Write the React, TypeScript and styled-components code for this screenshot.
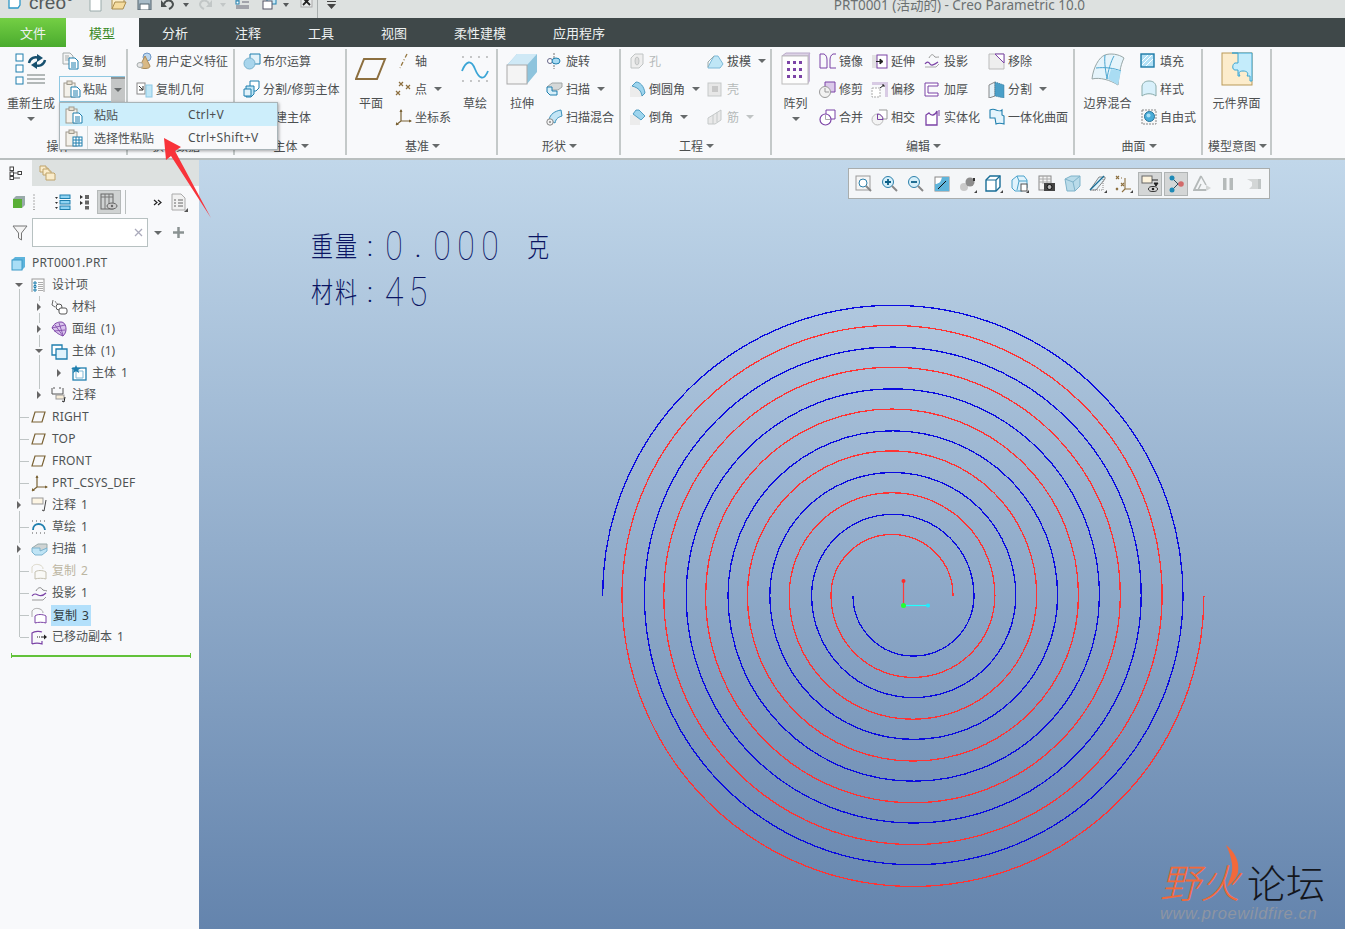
import React from "react";
import styled, { createGlobalStyle } from "styled-components";

const Global = createGlobalStyle`
  html, body { margin: 0; padding: 0; background: #f8f9fb; }
  * { box-sizing: border-box; }
`;

const FONT = `"Noto Sans", "Noto Sans CJK SC", sans-serif`;

const Page = styled.div`
  position: relative;
  width: 1345px;
  height: 929px;
  overflow: hidden;
  display: flex;
  flex-direction: column;
  font-family: ${FONT};
  font-size: 12px;
  color: #4c4f50;
  background: #f8f9fb;
`;

/* ---------- icons ---------- */
const Svg = styled.svg`
  display: block;
  flex: none;
`;
type IconProps = { w?: number; h?: number; vb?: string; children: React.ReactNode };
const Ic = ({ w = 16, h, vb, children }: IconProps) => (
  <Svg width={w} height={h ?? w} viewBox={vb ?? `0 0 ${w} ${h ?? w}`} fill="none">
    {children}
  </Svg>
);
const B = "#1f7fae";
const LB = "#bfe6f6";
const P = "#7b43a6";
const G = "#a4abab";

const icons: Record<string, React.ReactNode> = {
  regen: (
    <Ic w={32} h={34}>
      <rect x="1" y="2" width="7" height="7" fill="#fff" stroke={B} />
      <rect x="1" y="13" width="7" height="7" fill="#fff" stroke={B} />
      <rect x="1" y="25" width="7" height="7" fill="#fff" stroke={B} />
      <path d="M14 11c1-5 6-7 10-5M30 8c-1 5-6 7-10 5" stroke="#17506f" strokeWidth="2.400" />
      <path d="M22 2l6 4-6 4zM22 9l-6 4 6 4z" fill="#17506f" />
      <path d="M12 23h18M12 27h18M12 31h18" stroke="#9aa2a2" strokeWidth="1.400" />
    </Ic>
  ),
  copy: (
    <Ic w={18}>
      <path d="M1 1h7l3 3v8H1z" fill="#f5f5f5" stroke={G} />
      <path d="M3 4h4M3 6h5M3 8h5" stroke={G} />
      <path d="M7 6h6l3 3v8H7z" fill="#fff" stroke={B} />
      <path d="M9 11h5M9 13h5M9 15h5" stroke={B} />
    </Ic>
  ),
  paste: (
    <Ic w={18}>
      <rect x="1" y="3" width="11" height="14" fill="#f4f1ea" stroke="#9f9a8e" />
      <rect x="4" y="1" width="5" height="3.500" fill="#e6e0d2" stroke="#9f9a8e" />
      <path d="M8 7h6l3 3v7H8z" fill="#fff" stroke={B} />
      <path d="M10 11h5M10 13h5M10 15h5" stroke={B} />
    </Ic>
  ),
  pasteS: (
    <Ic w={18}>
      <rect x="1" y="3" width="11" height="14" fill="#f4f1ea" stroke="#9f9a8e" />
      <rect x="4" y="1" width="5" height="3.500" fill="#e6e0d2" stroke="#9f9a8e" />
      <rect x="8" y="8" width="9" height="9" fill="#fff" stroke={B} />
      <path d="M8 11h9M8 14h9M11 8v9M14 8v9" stroke={B} />
    </Ic>
  ),
  udf: (
    <Ic w={18}>
      <circle cx="11" cy="5" r="4" fill="#bcd7ef" stroke="#6f97c6" />
      <path d="M9 4 4 14a5 2.500 0 0 0 10 0z" fill="#d9b985" stroke="#a98a58" />
      <ellipse cx="4" cy="13" rx="3" ry="2.500" fill="#e7e7e7" stroke={G} />
    </Ic>
  ),
  cgeom: (
    <Ic w={18}>
      <rect x="1" y="3" width="8" height="11" fill="#fff" stroke="#888" />
      <path d="M3 6l4 4M7 6v4H3" stroke="#333" />
      <rect x="10" y="5" width="6" height="12" fill={LB} stroke="#8cc7e4" />
    </Ic>
  ),
  bool: (
    <Ic w={18}>
      <path d="M7 2h10v10H7z" fill="#e2f2fa" stroke={B} />
      <circle cx="6.500" cy="11.500" r="5.500" fill="#a8d5ec" stroke="#7ab2ce" />
    </Ic>
  ),
  split: (
    <Ic w={18}>
      <path d="M7 1h9v7l-3 3H7z" fill="#fff" stroke={B} />
      <path d="M3 6h8v8l-3 3H3z" fill={LB} stroke={B} />
      <path d="M1 9h7v7H1z" fill="#e2f2fa" stroke={B} />
    </Ic>
  ),
  cube: (
    <Ic w={18}>
      <path d="M5 2h10v10H5z" fill="#fff" stroke={B} />
      <path d="M2 6h10v10H2z" fill="#e2f2fa" stroke={B} />
    </Ic>
  ),
  plane: (
    <Ic w={32} h={24}>
      <path d="M9 2h21l-8 20H1z" stroke="#8c6f3f" strokeWidth="2" />
    </Ic>
  ),
  axis: (
    <Ic w={16}>
      <path d="M12 1 5 15" stroke="#94763f" strokeWidth="1.300" strokeDasharray="4 2 1 2" />
    </Ic>
  ),
  point: (
    <Ic w={16}>
      <path d="M4 1l4 4M8 1 4 5M11 4l4 4M15 4l-4 4M1 10l4 4M5 10l-4 4" stroke="#8c6f3f" strokeWidth="1.200" />
    </Ic>
  ),
  csys: (
    <Ic w={17}>
      <path d="M6 1v11M6 12h10M6 12l-5 4" stroke="#7a6234" strokeWidth="1.200" />
      <path d="M4.500 3 6 0l1.500 3zM14 10.500l3 1.500-3 1.500zM1 13l0 3 3 0z" fill="#7a6234" />
    </Ic>
  ),
  sketch: (
    <Ic w={28} h={30}>
      <path d="M2 3h0M10 3h0M18 3h0M26 3h0M2 27h0M10 27h0M18 27h0M26 27h0" stroke="#666" strokeWidth="1.300" strokeLinecap="round" />
      <path d="M1 17C5 7 10 5 14 15s9 12 13 2" stroke="#3ba5d6" strokeWidth="1.800" />
    </Ic>
  ),
  extrude: (
    <Ic w={32}>
      <path d="M1 12 11 1h20v18L21 31V12z" fill="#8ec4dd" />
      <path d="M1 12 11 1h20L21 12z" fill="#cfe9f6" />
      <rect x="1" y="12" width="20" height="19" fill="#f4f4f4" stroke="#a9a9a9" />
    </Ic>
  ),
  revolve: (
    <Ic w={16}>
      <path d="M8 0v16" stroke="#777" strokeDasharray="2 1" />
      <ellipse cx="4" cy="8" rx="2.500" ry="2.500" fill="#fff" stroke="#668" />
      <ellipse cx="10" cy="8" rx="4" ry="3" fill="#a8daf2" stroke={B} />
    </Ic>
  ),
  sweep: (
    <Ic w={17}>
      <path d="M1 6 6 2h10v4l-4 3H5z" fill="#d5d8d8" stroke="#a0a5a5" />
      <path d="M1 6h5v4l5 0v4H4l-3-3z" fill="#d8eff9" stroke={B} />
    </Ic>
  ),
  sblend: (
    <Ic w={18}>
      <path d="M3 12c1-6 6-9 12-10l1 6c-3 1-6 2-7 7z" fill="#c3e5f5" stroke="#3a91bb" />
      <circle cx="4" cy="14" r="3.200" fill="#f1f1f1" stroke="#888" />
      <circle cx="4" cy="14" r="1" fill="#888" />
    </Ic>
  ),
  hole: (
    <Ic w={16}>
      <path d="M2 5l4-4h8v10l-4 4H2z" fill="#eee" stroke="#c0c4c4" />
      <ellipse cx="8" cy="8" rx="2" ry="4" fill="#ddd" stroke="#c0c4c4" />
    </Ic>
  ),
  round: (
    <Ic w={17} h={17}>
      <path d="M1 5h6c4 0 8 4 9 8l-3 3H1z" fill="#ececec" />
      <path d="M7 1c4 0 8 4 9 11l-3 3C12 10 10 7 3 5z" fill="#9ed5ee" stroke={B} strokeWidth=".7" />
    </Ic>
  ),
  chamfer: (
    <Ic w={17} h={17}>
      <path d="M1 6h5l5 5v5H1z" fill="#ececec" />
      <path d="M7 1h3l6 6-4 4-8-6z" fill="#9ed5ee" stroke={B} strokeWidth=".7" />
    </Ic>
  ),
  draft: (
    <Ic w={17}>
      <path d="M1 14 7 3h4l5 8-3 4H1z" fill={LB} stroke="#7cb9d8" />
      <path d="M1 14V9l6-6" stroke="#9aa" />
    </Ic>
  ),
  shell: (
    <Ic w={16}>
      <rect x="1" y="2" width="13" height="13" fill="#e7e7e7" stroke="#c5c9c9" />
      <rect x="5" y="5" width="6" height="6" fill="#c8c8c8" />
    </Ic>
  ),
  rib: (
    <Ic w={16}>
      <path d="M1 9l5-3 8-5v10l-6 4H1z" fill="#e9e9e9" stroke="#c5c9c9" />
      <path d="M6 6v9M10 3v10" stroke="#c5c9c9" />
    </Ic>
  ),
  pattern: (
    <Ic w={30} h={34}>
      <path d="M1 4 5 1h24l-2 3z" fill="#ddd3e6" stroke="#b9a9c9" />
      <path d="M27 4l2-3v28l-2 3z" fill="#c6b3d8" />
      <rect x="1" y="4" width="26" height="28" fill="#fdfdfd" stroke="#bbb" />
      {[9, 16, 23].map((y) => [6, 12, 18].map((x) => <rect key={`${x}${y}`} x={x} y={y} width="3" height="3" fill={P} />))}
    </Ic>
  ),
  mirror: (
    <Ic w={18}>
      <path d="M1 2h4c2 1 3 3 3 6v8H1zM17 2h-3c-2 1-3 3-3 6v8h6" stroke={P} />
    </Ic>
  ),
  extend: (
    <Ic w={17}>
      <rect x="1" y="2" width="5" height="13" fill="#e2e2e2" />
      <rect x="6" y="2" width="10" height="13" fill="#fff" stroke={P} />
      <path d="M5 8.500h6M9 6l3 2.500-3 2.500z" stroke="#222" fill="#222" />
    </Ic>
  ),
  project: (
    <Ic w={16}>
      <path d="M5 5c2-4 4-4 5-2s3 1 5 1" stroke="#999" />
      <path d="M1 11c2-3 4-2 5 0s4 1 8-2" stroke={P} strokeWidth="1.200" />
      <path d="M1 14h11l3-3" stroke="#aaa" />
    </Ic>
  ),
  remove: (
    <Ic w={17}>
      <path d="M1 1h15v15H1z" fill="#eee" stroke="#bbb" />
      <path d="M7 1h9v9z" fill="#fff" stroke={P} />
    </Ic>
  ),
  trim: (
    <Ic w={18}>
      <path d="M6 2h10v10H6z" fill="#dbc9ea" stroke={P} />
      <circle cx="6" cy="12" r="5.500" fill="#f2f2f2" stroke="#999" />
      <path d="M6 12V8M6 12h4" stroke="#999" />
    </Ic>
  ),
  offset: (
    <Ic w={18}>
      <path d="M1 2h16v15h-3V5H1z" fill="#d8cbe4" />
      <path d="M1 8h8v9H1z" fill="#fff" stroke="#aaa" strokeDasharray="2 1" />
      <path d="M9 8l4-3M11 5h2v2" stroke="#222" />
    </Ic>
  ),
  thicken: (
    <Ic w={15}>
      <path d="M1 1h13v3H4v7h10v3H1z" fill="#fff" stroke={P} />
    </Ic>
  ),
  split2: (
    <Ic w={17}>
      <path d="M1 4 7 1v14l-6 2z" fill="#e5f3fb" stroke="#888" />
      <path d="M7 1l9 3v13l-9-2z" fill="#4a9fc8" stroke="#3d7d9f" strokeDasharray="1 1" />
    </Ic>
  ),
  merge: (
    <Ic w={18}>
      <path d="M7 2h9v9H7z" fill="#fff" stroke={P} />
      <circle cx="6.500" cy="11.500" r="5.500" fill="#fff" stroke={P} strokeWidth="1.200" />
      <path d="M6.500 11.500V7M6.500 11.500H11" stroke="#aaa" />
    </Ic>
  ),
  intersect: (
    <Ic w={18}>
      <path d="M8 2h8v9H8" stroke="#999" fill="#fff" />
      <circle cx="6.500" cy="11.500" r="5.500" fill="#f3f3f3" stroke="#bbb" />
      <path d="M6.500 6a5.500 5.500 0 0 1 5.500 5.500h-5.500z" stroke={P} />
    </Ic>
  ),
  solidify: (
    <Ic w={17}>
      <path d="M2 6v10h11V2c-2 5-6 5-8 2z" fill="#fff" stroke={P} strokeWidth="1.300" />
      <path d="M15 1v6" stroke={P} />
    </Ic>
  ),
  unify: (
    <Ic w={18}>
      <path d="M2 2c2-1 4-1 6 0s5 1 6 0v5l2 1v8c-3-1-6-1-8 0l-1-6H2z" fill="#e4f4fc" stroke={B} strokeWidth="1.100" />
    </Ic>
  ),
  boundary: (
    <Ic w={34} h={34}>
      <path d="M1 27C2 16 8 5 14 3c5-2 14-1 19 3-4 8-5 18-6 27-8-5-18-8-26-6z" fill="#e5f4fb" stroke="#98a7a7" />
      <path d="M14 3c-1 8 1 18 2 24M5 16c9-1 18 0 25 3M23 4c-3 5-6 15-7 23" stroke="#49a5cf" />
      <path d="M20 17l10 2-3 14-10-6z" fill="#a9dcf3" />
    </Ic>
  ),
  fill: (
    <Ic w={16}>
      <rect x="1" y="1" width="13" height="13" fill="#b3e1f6" stroke="#1c7aa7" strokeWidth="1.400" />
      <path d="M2 8l6-6M2 12 12 2M6 13l7-7" stroke="#fff" />
    </Ic>
  ),
  style: (
    <Ic w={18}>
      <path d="M2 16V6C3 2 6 1 9 1s6 1 7 5v10c-4-3-10-3-14 0z" fill="#d8f0fb" stroke="#8aa" />
    </Ic>
  ),
  free: (
    <Ic w={18}>
      <rect x="2" y="2" width="14" height="14" fill="#f6f6f6" stroke="#888" strokeDasharray="2 1" />
      <circle cx="9.500" cy="8.500" r="5" fill="#49acd8" stroke="#27749a" />
      <circle cx="8.500" cy="7.500" r="2" fill="#a8dff5" />
    </Ic>
  ),
  iface: (
    <Ic w={32} h={34}>
      <rect x="1" y="1" width="30" height="32" fill="#fceccc" stroke="#b99a58" />
      <path d="M11 1h20v28h-2v-5h-3c2-3 0-5-4-5s-5 2-3 5h-2v-6h-3c-3 0-3-6 0-7h3V1z" fill="#c4ecfb" stroke="#3aa5d3" />
    </Ic>
  ),
  treeMode: (
    <Ic w={14}>
      <path d="M3 3v9h8M3 7h8" stroke="#555" />
      <rect x="1" y="1" width="3.500" height="3.500" fill="#fff" stroke="#444" />
      <rect x="1" y="6" width="3.500" height="3.500" fill="#fff" stroke="#444" />
      <rect x="1" y="10.500" width="3.500" height="3" fill="#fff" stroke="#444" />
      <rect x="9" y="5.500" width="3.500" height="3" fill="#fff" stroke="#444" />
    </Ic>
  ),
  folders: (
    <Ic w={18}>
      <path d="M1 2h6v2h2v4H1z" fill="#faeccb" stroke="#bfa36a" />
      <path d="M4 5h6v2h2v4H4z" fill="#faeccb" stroke="#bfa36a" />
      <path d="M7 9h8l1 1v6H7z" fill="#faeccb" stroke="#bfa36a" />
    </Ic>
  ),
  greenCube: (
    <Ic w={14}>
      <path d="M1 4l3-3h9v9l-3 3z" fill="#9aa" />
      <rect x="1" y="4" width="9" height="9" fill="#5ab036" />
    </Ic>
  ),
  grip: (
    <Ic w={4} h={16}>
      <path d="M1 1h2M1 4h2M1 7h2M1 10h2M1 13h2M1 15.500h2" stroke="#aaa" />
    </Ic>
  ),
  listTree: (
    <Ic w={16}>
      <path d="M0 3h3L1.500 5zM0 8h3L1.500 10zM0 13h3L1.500 15z" fill="#333" />
      <rect x="5" y="1" width="10" height="3.500" fill="#8fd3f2" stroke={B} />
      <rect x="5" y="6.500" width="10" height="3.500" fill="#8fd3f2" stroke={B} />
      <rect x="5" y="12" width="10" height="3.500" fill="#8fd3f2" stroke={B} />
    </Ic>
  ),
  listDots: (
    <Ic w={10} h={16}>
      <path d="M0 3l3 2-3 2zM0 9l3 2-3 2z" fill="#333" transform="translate(0 -2)" />
      <rect x="5" y="1" width="4" height="4" fill="#666" />
      <rect x="5" y="6.500" width="4" height="4" fill="#666" />
      <rect x="5" y="12" width="4" height="3.500" fill="#666" />
    </Ic>
  ),
  tableEye: (
    <Ic w={18}>
      <rect x="1" y="1" width="12" height="15" fill="none" stroke="#666" />
      <path d="M1 4h12M5 1v15M9 1v15" stroke="#777" />
      <ellipse cx="12" cy="13" rx="5" ry="3" fill="#ccc" stroke="#666" />
      <circle cx="12" cy="13" r="1.200" fill="#666" />
    </Ic>
  ),
  more: (
    <Ic w={9}>
      <path d="M1 2l3 2.500-3 2.500M5 2l3 2.500-3 2.500" stroke="#222" strokeWidth="1.200" />
    </Ic>
  ),
  docList: (
    <Ic w={17} h={19}>
      <path d="M1 1h9l4 4v12H1z" fill="#f1f1f1" stroke="#aaa" />
      <path d="M3 7h2M7 7h5M3 10h2M7 10h5M3 13h2M7 13h5" stroke="#666" />
      <path d="M17 15v4h-4z" fill="#555" />
    </Ic>
  ),
  funnel: (
    <Ic w={16}>
      <path d="M1 1h14L9.500 8v7l-3-2V8z" fill="#f4f4f4" stroke="#777" />
    </Ic>
  ),
  xMark: (
    <Ic w={9}>
      <path d="M1 1l7 7M8 1 1 8" stroke="#aab" strokeWidth="1.300" />
    </Ic>
  ),
  plus: (
    <Ic w={11}>
      <path d="M5.500 0v11M0 5.500h11" stroke="#8a9292" strokeWidth="2.500" />
    </Ic>
  ),
  part: (
    <Ic w={15}>
      <path d="M1 4l3-3h10v10l-3 3z" fill="#5eb4dc" />
      <rect x="1" y="4" width="10" height="10" fill="#a9def6" stroke="#3b9ac7" />
    </Ic>
  ),
  design: (
    <Ic w={14}>
      <rect x="1" y="1" width="12" height="14" fill="#fdfdfd" stroke="#999" />
      <path d="M3 4h2v2H3zM3 7.500h2v2H3zM3 11h2v2H3z" fill="#fff" stroke={B} />
      <path d="M7 4.500h5M7 6.500h5M7 8.500h5M7 10.500h5M7 12.500h5" stroke="#888" strokeWidth=".7" />
    </Ic>
  ),
  material: (
    <Ic w={17}>
      <path d="M2 1 1 6l3 2" stroke="#666" />
      <path d="M4 2c1 1 1 3 3 3" stroke="#888" />
      <circle cx="8" cy="8" r="3" fill="#fff" stroke="#555" />
      <rect x="8" y="9" width="8" height="6" rx="2" fill="#fff" stroke="#555" />
    </Ic>
  ),
  quilt: (
    <Ic w={16}>
      <path d="M1 7C3 2 7 1 10 1s5 3 5 7c0 3-1 5-3 7-3-1-7-3-11-8z" fill="#d8c2ec" stroke={P} />
      <path d="M4 4l8 11M8 2l4 12M1 7l13-3M3 10l11-1" stroke={P} strokeWidth=".8" />
    </Ic>
  ),
  bodies: (
    <Ic w={17}>
      <path d="M1 2h10v10H1z" fill="#fff" stroke={B} strokeWidth="1.300" />
      <path d="M5 6h11v10H5z" fill="#e0f3fc" stroke={B} strokeWidth="1.300" />
    </Ic>
  ),
  body: (
    <Ic w={16}>
      <rect x="2" y="3" width="13" height="12" fill="#fff" stroke={B} strokeWidth="1.300" />
      <path d="M5 6h7v7H5z" stroke="#7fb7d4" />
      <path d="M5 0l1.400 3H10L7.200 5l1 3L5 6.200 2 8l1-3L0 3h3.600z" fill={B} />
    </Ic>
  ),
  note: (
    <Ic w={16}>
      <path d="M1 1v6h11V1M3 0v2M9 0v2" stroke="#555" />
      <rect x="5" y="8" width="8" height="4" fill="#f6ecd8" stroke="#999" />
      <path d="M14 10l-1 5-2-1" stroke="#222" />
    </Ic>
  ),
  datum: (
    <Ic w={15} h={12}>
      <path d="M4 1h10l-3 10H1z" stroke="#7a6234" strokeWidth="1.200" />
    </Ic>
  ),
  note1: (
    <Ic w={17}>
      <rect x="1" y="1" width="11" height="6" fill="#fdf5e3" stroke="#999" />
      <path d="M15 3l-2 11M11 13l2 1" stroke="#444" />
    </Ic>
  ),
  sketch1: (
    <Ic w={16}>
      <path d="M1 2h1M5 2h1M9 2h1M13 2h1M1 14h1M5 14h1M9 14h1M13 14h1" stroke="#555" />
      <path d="M2 11C2 3 13 3 14 11" stroke={B} strokeWidth="1.800" />
    </Ic>
  ),
  sweep1: (
    <Ic w={17} h={14}>
      <path d="M1 6 7 2h9v4l-5 3H5z" fill="#cfd4d4" stroke="#9aa" />
      <path d="M1 6h8v3l7-3v3l-5 4H4l-3-3z" fill="#bfe4f5" stroke="#7db4d0" />
    </Ic>
  ),
  copyFaded: (
    <Ic w={17}>
      <path d="M1 10V4c2-3 5-3 8-2 2 1 3 2 3 4" stroke="#dcd8c9" />
      <path d="M4 16V9c2-2 8-2 11 0v7c-3-1-8-1-11 0z" fill="#f9f9f6" stroke="#c4c0b0" />
    </Ic>
  ),
  project1: (
    <Ic w={17}>
      <path d="M5 6c2-4 5-4 6-2s3 1 5 2" stroke="#888" />
      <path d="M1 11c2-3 4-2 6-1s5 1 8-2" stroke={P} strokeWidth="1.200" />
      <path d="M1 15h11l3-3" stroke="#999" />
    </Ic>
  ),
  copyP: (
    <Ic w={17}>
      <path d="M1 10V4c2-3 5-3 8-2 2 1 3 2 3 4" stroke="#aaa" />
      <path d="M4 16V9c2-2 8-2 11 0v7c-3-1-8-1-11 0z" fill="#fff" stroke={P} />
    </Ic>
  ),
  moved: (
    <Ic w={17}>
      <path d="M1 15V4c3-2 8-2 10-1M1 15c3-1 7-1 10 0v-3" stroke={P} strokeWidth="1.200" />
      <path d="M6 8h1M8 8h1M10 8h3" stroke="#222" />
      <path d="M13 5.500l3 2.500-3 2.500z" fill="#222" />
    </Ic>
  ),
  /* quick access */
  qNew: (
    <Ic w={13} h={17}>
      <path d="M1 0h8l3 3v13H1z" fill="#fff" stroke="#9aa" />
    </Ic>
  ),
  qOpen: (
    <Ic w={16}>
      <path d="M1 14V2h5l2 2h5v3" fill="#fbeecb" stroke="#a98c4d" />
      <path d="M1 14l3-7h11l-3 7z" fill="#f5dc9f" stroke="#a98c4d" />
    </Ic>
  ),
  qSave: (
    <Ic w={15}>
      <path d="M1 1h13v14H1z" fill="#a9bcc8" stroke="#53636d" />
      <rect x="3" y="9" width="9" height="6" fill="#fff" stroke="#53636d" />
    </Ic>
  ),
  qUndo: (
    <Ic w={15}>
      <path d="M4 9c1-4 8-5 9 0 0 3-2 4-4 5" stroke="#4a5050" strokeWidth="2" />
      <path d="M1 5v7h6z" fill="#4a5050" />
    </Ic>
  ),
  qRedo: (
    <Ic w={15}>
      <path d="M11 9C10 5 3 4 2 9c0 3 2 4 4 5" stroke="#c2c7c7" strokeWidth="2" />
      <path d="M14 5v7H8z" fill="#c2c7c7" />
    </Ic>
  ),
  qRegen: (
    <Ic w={15}>
      <rect x="1" y="2" width="3" height="3" fill="#fff" stroke={B} />
      <rect x="1" y="6" width="3" height="3" fill="#fff" stroke={B} />
      <path d="M1 11h13M1 13h13M7 7h7" stroke="#667" />
      <path d="M8 4c2-3 4-3 6 0" stroke="#1d5f86" strokeWidth="1.500" />
    </Ic>
  ),
  qWin: (
    <Ic w={15}>
      <rect x="5" y="1" width="9" height="8" fill="#c8e9f7" stroke={B} />
      <rect x="1" y="6" width="9" height="8" fill="#fff" stroke="#556" />
    </Ic>
  ),
  qClose: (
    <Ic w={13}>
      <rect x="1" y="1" width="11" height="11" fill="#e7eaea" stroke="#aaa" />
      <path d="M3 3l7 7M10 3l-7 7" stroke="#222" strokeWidth="1.800" />
    </Ic>
  ),
  qMore: (
    <Ic w={9} h={8}>
      <path d="M0 0h9v1H0zM0 3h9L4.500 8z" fill="#444" />
    </Ic>
  ),
  logo: (
    <Ic w={13} h={16}>
      <path d="M1 0v14h9l2-3V0" fill="#fff" stroke="#2e97c8" strokeWidth="1.300" />
    </Ic>
  ),
  /* view toolbar */
  vRefit: (
    <Ic w={18}>
      <rect x="1" y="1" width="14" height="14" fill="#f5f5f5" stroke="#999" />
      <circle cx="8" cy="8" r="4" fill="#fff" stroke="#2c80ab" />
      <path d="M11 11l5 5" stroke="#888" strokeWidth="2" />
    </Ic>
  ),
  vIn: (
    <Ic w={18}>
      <circle cx="7" cy="7" r="5.500" fill="#d6effa" stroke="#2c80ab" />
      <path d="M4 7h6M7 4v6" stroke="#0c5f88" strokeWidth="1.800" />
      <path d="M11 11l5 5" stroke="#888" strokeWidth="2" />
    </Ic>
  ),
  vOut: (
    <Ic w={18}>
      <circle cx="7" cy="7" r="5.500" fill="#d6effa" stroke="#2c80ab" />
      <path d="M4 7h6" stroke="#0c5f88" strokeWidth="1.800" />
      <path d="M11 11l5 5" stroke="#888" strokeWidth="2" />
    </Ic>
  ),
  vRepaint: (
    <Ic w={16}>
      <rect x="1" y="1" width="14" height="14" fill="#fff" stroke="#888" />
      <path d="M1 15V8c4 0 6-2 7-7h7v14z" fill="#5fb4da" />
      <path d="M4 13 12 5" stroke="#111" />
    </Ic>
  ),
  vShade: (
    <Ic w={18}>
      <circle cx="5" cy="12" r="4" fill="#c9c9c9" />
      <circle cx="11" cy="7" r="4.500" fill="#8d8d8d" />
      <path d="M14 3h2v3h-2z" fill="#333" />
      <path d="M18 15v3h-3z" fill="#444" />
    </Ic>
  ),
  vCube: (
    <Ic w={18}>
      <path d="M1 5l4-4h10v11l-4 4H1z" fill="#fff" stroke="#186d96" strokeWidth="1.400" />
      <path d="M1 5h10v11M11 5l4-4" stroke="#186d96" strokeWidth="1.200" />
      <path d="M18 15v3h-3z" fill="#444" />
    </Ic>
  ),
  vSaved: (
    <Ic w={18}>
      <path d="M1 5l5-4h7l3 4v8l-5 3H4l-3-3z" fill="#e0f3fc" stroke="#4aa2cb" />
      <path d="M6 1l2 5h8M8 6l-2 9" stroke="#4aa2cb" />
      <rect x="10" y="9" width="6" height="7" fill="#fff" stroke="#555" />
      <path d="M18 15v3h-3z" fill="#444" />
    </Ic>
  ),
  vCam: (
    <Ic w={17}>
      <rect x="1" y="1" width="12" height="14" fill="#f5f5f5" stroke="#888" />
      <path d="M1 4h12M1 7h12M5 1v8M9 1v8" stroke="#aaa" />
      <rect x="6" y="8" width="11" height="8" fill="#444" />
      <circle cx="11.500" cy="12" r="2.500" fill="#bbb" stroke="#111" />
    </Ic>
  ),
  vGlass: (
    <Ic w={17}>
      <path d="M1 4l6-3h9v10l-5 5H3z" fill="#b9dbe9" stroke="#7fb3ca" />
      <path d="M1 4l8 3 7-6M9 7l2 9" stroke="#7fb3ca" />
    </Ic>
  ),
  vPlane: (
    <Ic w={18}>
      <path d="M1 15 10 2h6v2L7 15z" fill="#e1f2fa" stroke="#888" />
      <path d="M1 15 15 1" stroke="#186d96" strokeWidth="1.300" />
      <path d="M14 4v11H4" stroke="#888" strokeDasharray="1 1" />
      <path d="M18 15v3h-3z" fill="#444" />
    </Ic>
  ),
  vDatum: (
    <Ic w={18}>
      <path d="M1 1l3 3M4 1 1 4M6 8l3 3M9 8l-3 3M1 13l2 2M3 13l-2 2" stroke="#8c6f3f" strokeWidth="1.100" />
      <path d="M10 3v11h6M10 14l-3 3M6 3h1" stroke="#8c6f3f" strokeWidth="1.100" />
      <path d="M18 15v3h-3z" fill="#444" />
    </Ic>
  ),
  vSpin: (
    <Ic w={18}>
      <rect x="1" y="1" width="10" height="7" fill="#fdf3dc" stroke="#666" />
      <path d="M11 5h6M13 8h4l-2 3z" stroke="#222" fill="#222" />
      <ellipse cx="12" cy="14" rx="4.500" ry="2.500" fill="#ddd" stroke="#333" />
      <circle cx="12" cy="14" r="1.300" fill="#222" />
    </Ic>
  ),
  vNode: (
    <Ic w={18}>
      <path d="M5 3l6 6-6 6" stroke="#2a4f5e" />
      <path d="M11 9h3" stroke="#2a4f5e" />
      <circle cx="5" cy="3" r="2.500" fill="#1f8ab6" />
      <circle cx="5" cy="15" r="2.500" fill="#1f8ab6" />
      <circle cx="14" cy="9" r="2.800" fill="#d26a6a" />
    </Ic>
  ),
  vTri: (
    <Ic w={18}>
      <path d="M8 1 1 15h12" stroke="#b4b9b9" strokeWidth="1.800" />
      <path d="M8 1l5 9M5 15l3-6" stroke="#b4b9b9" strokeWidth="1.500" />
      <path d="M13 10l5 3-5 3z" fill="#d3d6d6" />
    </Ic>
  ),
  vPause: (
    <Ic w={12}>
      <path d="M1 0h3.500v12H1zM7.500 0H11v12H7.500z" fill="#b5baba" />
    </Ic>
  ),
  vStop: (
    <Ic w={16} h={12}>
      <path d="M1 1h14v10H3l3-3V4z" fill="#d3d6d6" />
      <path d="M12 1h3v10h-3z" fill="#bfc4c4" />
    </Ic>
  ),
};

/* ---------- title bar ---------- */
const TitleBar = styled.div`
  height: 18px;
  flex: none;
  background: #dde1e0;
  overflow: hidden;
  display: flex;
  align-items: flex-start;
  padding-left: 8px;
`;
const LogoText = styled.span`
  font-family: "Liberation Sans", sans-serif;
  font-size: 19px;
  line-height: 18px;
  color: #555a5c;
  margin: -6px 0 0 8px;
  width: 60px;
  flex: none;
`;
const LogoMark = styled.div`
  margin-top: -6px;
`;
const QatIcon = styled.div<{ $w: number }>`
  width: ${(p) => p.$w}px;
  margin-top: -5px;
  flex: none;
`;
const QatCaret = styled.i<{ $l: number; $r: number; $off?: boolean }>`
  display: block;
  flex: none;
  width: 0;
  height: 0;
  margin: 3px ${(p) => p.$r}px 0 ${(p) => p.$l}px;
  border: 3px solid transparent;
  border-top: 4px solid ${(p) => (p.$off ? "#c2c7c7" : "#55595a")};
  border-bottom: 0;
`;
const QatSep = styled.i`
  display: block;
  width: 1px;
  height: 18px;
  background: #a9afaf;
  margin-right: 9px;
  flex: none;
`;
const QatEnd = styled.div`
  margin-top: 1px;
`;
const Title = styled.div`
  margin: -4px 260px 0 auto;
  font-size: 13.500px;
  line-height: 18px;
  color: #6b7071;
  white-space: nowrap;
`;

/* ---------- tabs ---------- */
const TabBar = styled.div`
  height: 29px;
  flex: none;
  display: flex;
  background: #3f4849;
`;
const Tab = styled.div<{ $kind?: "file" | "active" }>`
  height: 29px;
  line-height: 30px;
  font-size: 13px;
  text-align: center;
  padding: ${(p) => (p.$kind === "file" ? "0 20px" : "0 24px 0 23px")};
  color: ${(p) => (p.$kind === "active" ? "#3d8c2a" : "#eef1f1")};
  background: ${(p) =>
    p.$kind === "file" ? "linear-gradient(#74cf44,#4aab2e)" : p.$kind === "active" ? "#f8f9fb" : "transparent"};
`;

/* ---------- ribbon ---------- */
const Ribbon = styled.div`
  height: 113px;
  flex: none;
  display: flex;
  background: #f8f9fb;
  border-bottom: 2px solid #b9bfbf;
`;
const GroupBox = styled.div<{ $w: number; $pl?: number }>`
  width: ${(p) => p.$w}px;
  height: 111px;
  flex: none;
  display: flex;
  flex-direction: column;
  padding-left: ${(p) => p.$pl ?? 0}px;
  background: linear-gradient(#c4c9c9, #c4c9c9) right 2px / 2px 106px no-repeat;
`;
const GroupBody = styled.div`
  height: 86px;
  display: flex;
`;
const GroupLabel = styled.div<{ $x?: number }>`
  height: 25px;
  margin-left: ${(p) => -(p.$x ?? 0)}px;
  display: flex;
  align-items: center;
  justify-content: center;
  gap: 3px;
  padding-top: 1px;
  white-space: nowrap;
`;
const Caret = styled.i<{ $off?: boolean }>`
  display: block;
  flex: none;
  width: 0;
  height: 0;
  border: 4px solid transparent;
  border-top: 4.500px solid ${(p) => (p.$off ? "#c0c4c4" : "#666a6b")};
  border-bottom: 0;
`;
const Col = styled.div<{ $w?: number }>`
  width: ${(p) => (p.$w ? `${p.$w}px` : "auto")};
  flex: none;
  display: flex;
  flex-direction: column;
`;
const Item = styled.div<{ $off?: boolean }>`
  height: 28px;
  display: flex;
  align-items: center;
  white-space: nowrap;
  color: ${(p) => (p.$off ? "#b5b9b9" : "inherit")};
`;
const ItemIcon = styled.span`
  width: 20px;
  flex: none;
  display: block;
`;
const ItemCaret = styled.span`
  margin-left: 7px;
`;
const Large = styled.div<{ $w: number }>`
  width: ${(p) => p.$w}px;
  flex: none;
  display: flex;
  flex-direction: column;
  align-items: center;
  white-space: nowrap;
`;
const LargeIcon = styled.div`
  height: 45px;
  padding-bottom: 1px;
  display: flex;
  align-items: center;
  justify-content: center;
`;
const LargeText = styled.div`
  height: 20px;
  line-height: 21px;
  margin-top: 1px;
`;
const LargeCaret = styled.div`
  margin-top: 4px;
`;
const PasteButton = styled.div`
  height: 26px;
  width: 66px;
  margin: 1px 0 1px -3px;
  padding-left: 3px;
  display: flex;
  align-items: center;
  border: 1px solid #8fc8e2;
  border-right: 0;
  background: #f8f9fb;
`;
const PasteDrop = styled.div`
  margin-left: auto;
  width: 14px;
  height: 25px;
  background: #c4c6c6;
  border-top: 2px solid #8e9292;
  display: flex;
  align-items: center;
  justify-content: center;
`;

const Popup = styled.div`
  position: absolute;
  left: 59px;
  top: 102px;
  width: 219px;
  height: 48px;
  z-index: 5;
  background: #f8f9fb;
  border: 1px solid #a9b4b8;
  box-shadow: 1px 1px 3px rgba(0, 0, 0, 0.35);
`;
const PopRow = styled.div<{ $on?: boolean }>`
  height: 23px;
  display: flex;
  align-items: center;
  background: ${(p) => (p.$on ? "#cdeefb" : "transparent")};
`;
const PopGutter = styled.div<{ $rule?: boolean }>`
  width: 28px;
  height: 23px;
  flex: none;
  padding-left: 5px;
  display: flex;
  align-items: center;
  border-right: ${(p) => (p.$rule ? "1px solid #d3d7d7" : "0")};
`;
const PopLabel = styled.div`
  width: 100px;
  padding-left: 6px;
  flex: none;
`;
const PopKey = styled.div`
  letter-spacing: 0.350px;
`;

/* ---------- main ---------- */
const Main = styled.div`
  flex: 1;
  display: flex;
  min-height: 0;
`;
const Side = styled.div`
  width: 199px;
  flex: none;
  background: #f8f9fb;
`;
const SideTabs = styled.div`
  height: 26px;
  display: flex;
  background: #dde1e0;
`;
const SideTab = styled.div<{ $on?: boolean }>`
  width: 32px;
  height: 26px;
  display: flex;
  align-items: center;
  justify-content: center;
  background: ${(p) => (p.$on ? "#f8f9fb" : "transparent")};
`;
const SideTools = styled.div`
  height: 32px;
  display: flex;
  align-items: center;
  padding-left: 12px;
`;
const ToolSlot = styled.div<{ $w: number }>`
  width: ${(p) => p.$w}px;
  flex: none;
  display: flex;
  align-items: center;
  justify-content: flex-start;
`;
const ToolActive = styled.div`
  width: 24px;
  height: 24px;
  flex: none;
  display: flex;
  align-items: center;
  justify-content: center;
  background: #cfd2d2;
  border: 1px solid #b5b9b9;
`;
const ToolRule = styled.i`
  display: block;
  width: 1px;
  height: 24px;
  margin: 0 27px 0 4px;
  background: #b9bebe;
`;
const FilterRow = styled.div`
  height: 29px;
  display: flex;
  align-items: center;
  padding-left: 12px;
`;
const FilterBox = styled.div`
  width: 116px;
  height: 29px;
  margin: 0 6px 0 4px;
  display: flex;
  align-items: center;
  justify-content: flex-end;
  padding-right: 4px;
  background: #fff;
  border: 1px solid #b7c1c1;
`;
const Tree = styled.div`
  padding-top: 5px;
`;

const guide = (lv: number, l: boolean, deep: boolean, top: boolean, last: boolean, lastDeep: boolean) => {
  const out: string[] = [];
  const col = "linear-gradient(#bfc5c5,#bfc5c5)";
  if (lv >= 1) out.push(`${col} 19px ${top ? "10px" : "0"} / 1px ${last ? "11px" : "22px"} no-repeat`);
  if (l && lv === 1) out.push(`${col} 20px 11px / 9px 1px no-repeat`);
  if (deep) out.push(`${col} 39px 0 / 1px ${lastDeep ? "11px" : "22px"} no-repeat`);
  if (lv === 3) out.push(`${col} 59px 5px / 1px 6px no-repeat`);
  return out.length ? out.join(",") : "none";
};
const Row = styled.div<{
  $lv: number;
  $line: boolean;
  $deep: boolean;
  $top: boolean;
  $last: boolean;
  $lastDeep: boolean;
  $fade?: boolean;
}>`
  height: 22px;
  display: flex;
  align-items: center;
  white-space: nowrap;
  padding-left: ${(p) => (p.$lv === 0 ? 9 : 20 * p.$lv - 11)}px;
  color: ${(p) => (p.$fade ? "#bcb6a2" : "#4f5354")};
  background: ${(p) => guide(p.$lv, p.$line, p.$deep, p.$top, p.$last, p.$lastDeep)};
`;
const Exp = styled.span`
  width: 20px;
  height: 22px;
  flex: none;
  display: flex;
  align-items: center;
  justify-content: center;
`;
const ExpRight = styled.i`
  display: block;
  width: 0;
  height: 0;
  border: 4px solid transparent;
  border-left: 4.500px solid #666;
  border-right: 0;
  outline: 2px solid #f8f9fb;
  background: #f8f9fb;
`;
const ExpDown = styled.i`
  display: block;
  width: 0;
  height: 0;
  border: 4px solid transparent;
  border-top: 4.500px solid #666;
  border-bottom: 0;
  outline: 2px solid #f8f9fb;
  background: #f8f9fb;
`;
const RowIcon = styled.span`
  width: 23px;
  flex: none;
  padding-left: 2px;
  display: block;
`;
const RowText = styled.span<{ $sel?: boolean; $latin?: boolean }>`
  margin-left: ${(p) => (p.$sel ? "-1px" : "0")};
  padding: 0 ${(p) => (p.$sel ? "2px" : "0")};
  line-height: ${(p) => (p.$sel ? "21px" : "22px")};
  word-spacing: 2px;
  letter-spacing: ${(p) => (p.$latin ? "0.180px" : "0")};
  background: ${(p) => (p.$sel ? "#b3e0fb" : "transparent")};
  color: ${(p) => (p.$sel ? "#2f3a40" : "inherit")};
`;
const GreenRule = styled.div`
  height: 5px;
  margin: 5px 8px 0 11px;
  border-left: 1.500px solid #62c23a;
  border-right: 1.500px solid #62c23a;
  background: linear-gradient(#62c23a, #62c23a) center / 100% 2px no-repeat;
`;

/* ---------- graphics window ---------- */
const Graphics = styled.div`
  flex: 1;
  position: relative;
  background: linear-gradient(#c1d7ea, #6484ad);
  overflow: hidden;
`;
const ViewBar = styled.div`
  position: absolute;
  left: 649px;
  top: 8px;
  width: 422px;
  height: 31px;
  display: flex;
  align-items: center;
  padding-left: 3px;
  gap: 2px;
  background: #f4f6f8;
  border: 1px solid #a9adad;
`;
const ViewBtn = styled.div<{ $on?: boolean }>`
  width: 24px;
  height: 24px;
  flex: none;
  display: flex;
  align-items: center;
  justify-content: center;
  background: ${(p) => (p.$on ? "#d4d6d6" : "transparent")};
  border: 1px solid ${(p) => (p.$on ? "#b0b4b4" : "transparent")};
`;
const Note = styled.div<{ $top: number }>`
  position: absolute;
  left: 111px;
  top: ${(p) => p.$top}px;
  height: 36px;
  display: flex;
  color: #0a1462;
  font-family: Roboto, "Noto Sans CJK SC", sans-serif;
  font-weight: 100;
  line-height: 36px;
`;
const NoteCell = styled.span<{ $sx?: number; $sy?: number; $fs?: number; $wt?: number }>`
  width: 24px;
  flex: none;
  text-align: center;
  font-size: ${(p) => p.$fs ?? 25}px;
  font-weight: ${(p) => p.$wt ?? 100};
  display: block;
  transform: scale(${(p) => p.$sx ?? 1}, ${(p) => p.$sy ?? 1});
`;
const Spiral = styled.svg`
  position: absolute;
  left: 0;
  top: 0;
`;
const Watermark = styled.div`
  position: absolute;
  left: 961px;
  bottom: 8px;
  width: 170px;
  height: 76px;
`;
const WmTitle = styled.div`
  display: flex;
  align-items: center;
  height: 44px;
  margin: 14px 0 2px;
  font-family: "Noto Sans CJK SC", sans-serif;
  font-weight: 300;
  white-space: nowrap;
`;
const WmHot = styled.span`
  color: #f2693a;
  font-style: italic;
  width: 87px;
  flex: none;
  font-size: 40px;
  line-height: 44px;
`;
const WmCool = styled.span`
  color: #14161c;
  font-size: 39px;
  line-height: 44px;
`;
const WmUrl = styled.div`
  font-family: "Liberation Sans", sans-serif;
  font-style: italic;
  font-size: 16.500px;
  letter-spacing: 0.600px;
  line-height: 16px;
  color: #8d95a3;
  white-space: nowrap;
`;
const Flame = styled.svg`
  position: absolute;
  left: 63px;
  top: 0;
`;
const ArrowMark = styled.svg`
  position: absolute;
  left: 0;
  top: 0;
  z-index: 6;
  pointer-events: none;
`;

/* ---------- data ---------- */
type It = { i: string; t: string; c?: boolean; off?: boolean };
const Entry = ({ i, t, c, off }: It) => (
  <Item $off={off}>
    <ItemIcon>{icons[i]}</ItemIcon>
    {t}
    {c && (
      <ItemCaret>
        <Caret $off={off} />
      </ItemCaret>
    )}
  </Item>
);
const Stack = ({ w, items }: { w?: number; items: It[] }) => (
  <Col $w={w}>
    {items.map((x) => (
      <Entry key={x.t} {...x} />
    ))}
  </Col>
);
const Big = ({ w, i, t, c }: { w: number; i: string; t: string; c?: boolean }) => (
  <Large $w={w}>
    <LargeIcon>{icons[i]}</LargeIcon>
    <LargeText>{t}</LargeText>
    {c && (
      <LargeCaret>
        <Caret />
      </LargeCaret>
    )}
  </Large>
);
const Group = ({ w, pl, label, children }: { w: number; pl?: number; label: string; children: React.ReactNode }) => (
  <GroupBox $w={w} $pl={pl}>
    <GroupBody>{children}</GroupBody>
    <GroupLabel $x={pl}>
      {label}
      <Caret />
    </GroupLabel>
  </GroupBox>
);

type Node = { lv: number; i: string; t: string; e?: "r" | "d"; fade?: boolean; sel?: boolean };
const nodes: Node[] = [
  { lv: 0, i: "part", t: "PRT0001.PRT" },
  { lv: 1, i: "design", t: "设计项", e: "d" },
  { lv: 2, i: "material", t: "材料", e: "r" },
  { lv: 2, i: "quilt", t: "面组 (1)", e: "r" },
  { lv: 2, i: "bodies", t: "主体 (1)", e: "d" },
  { lv: 3, i: "body", t: "主体 1", e: "r" },
  { lv: 2, i: "note", t: "注释", e: "r" },
  { lv: 1, i: "datum", t: "RIGHT" },
  { lv: 1, i: "datum", t: "TOP" },
  { lv: 1, i: "datum", t: "FRONT" },
  { lv: 1, i: "csys", t: "PRT_CSYS_DEF" },
  { lv: 1, i: "note1", t: "注释 1", e: "r" },
  { lv: 1, i: "sketch1", t: "草绘 1" },
  { lv: 1, i: "sweep1", t: "扫描 1", e: "r" },
  { lv: 1, i: "copyFaded", t: "复制 2", fade: true },
  { lv: 1, i: "project1", t: "投影 1" },
  { lv: 1, i: "copyP", t: "复制 3", sel: true },
  { lv: 1, i: "moved", t: "已移动副本 1" },
];

const viewIcons: { i: string; on?: boolean }[] = [
  { i: "vRefit" },
  { i: "vIn" },
  { i: "vOut" },
  { i: "vRepaint" },
  { i: "vShade" },
  { i: "vCube" },
  { i: "vSaved" },
  { i: "vCam" },
  { i: "vGlass" },
  { i: "vPlane" },
  { i: "vDatum" },
  { i: "vSpin", on: true },
  { i: "vNode", on: true },
  { i: "vTri" },
  { i: "vPause" },
  { i: "vStop" },
];

/* Spiral: chains of half circles whose centres alternate, in the graphics window's own coordinates. */
const CY = 435.5;
const chain = (startX: number, startUp: boolean, r0: number, upC: number, downC: number) => {
  let d = `M${startX} ${CY}`;
  let up = startUp;
  let x = startX;
  for (let k = 0; k < 12; k++) {
    const c = up ? upC : downC;
    const target = r0 + 20.9 * k;
    const nx = x > c ? c - target : c + target;
    const r = Math.abs(nx - x) / 2;
    const sweep = nx < x ? (up ? 0 : 1) : up ? 1 : 0;
    d += ` A${r} ${r} 0 0 ${sweep} ${nx} ${CY}`;
    x = nx;
    up = !up;
  }
  return d;
};
const blue = chain(654, false, 60.5, 694, 714.5);
const red = chain(754, true, 61, 693, 714);

type Cell = { c: string; sx?: number; sy?: number; fs?: number; wt?: number };
const CJK = { fs: 24, sx: 0.92, sy: 1.2, wt: 300 };
const noteA: Cell[] = [
  { c: "重", ...CJK },
  { c: "量", ...CJK },
  { c: ":", fs: 28, wt: 300 },
  { c: "0", sx: 0.8, fs: 40 },
  { c: ".", fs: 30, wt: 300 },
  { c: "0", sx: 0.8, fs: 40 },
  { c: "0", sx: 0.8, fs: 40 },
  { c: "0", sx: 0.8, fs: 40 },
  { c: " " },
  { c: "克", ...CJK },
];
const noteB: Cell[] = [
  { c: "材", ...CJK },
  { c: "料", ...CJK },
  { c: ":", fs: 28, wt: 300 },
  { c: "4", sx: 0.85, fs: 40 },
  { c: "5", sx: 0.85, fs: 40 },
];

export default function App() {
  return (
    <Page>
      <Global />
      <TitleBar>
        <LogoMark>{icons.logo}</LogoMark>
        <LogoText>creo°</LogoText>
        <QatIcon $w={22}>{icons.qNew}</QatIcon>
        <QatIcon $w={26}>{icons.qOpen}</QatIcon>
        <QatIcon $w={23}>{icons.qSave}</QatIcon>
        <QatIcon $w={15}>{icons.qUndo}</QatIcon>
        <QatCaret $l={8} $r={9} />
        <QatIcon $w={15}>{icons.qRedo}</QatIcon>
        <QatCaret $l={7} $r={9} $off />
        <QatIcon $w={27}>{icons.qRegen}</QatIcon>
        <QatIcon $w={21}>{icons.qWin}</QatIcon>
        <QatCaret $l={0} $r={11} />
        <QatIcon $w={17}>{icons.qClose}</QatIcon>
        <QatSep />
        <QatEnd>{icons.qMore}</QatEnd>
        <Title>PRT0001 (活动的) - Creo Parametric 10.0</Title>
      </TitleBar>

      <TabBar>
        <Tab $kind="file">文件</Tab>
        <Tab $kind="active">模型</Tab>
        <Tab>分析</Tab>
        <Tab>注释</Tab>
        <Tab>工具</Tab>
        <Tab>视图</Tab>
        <Tab>柔性建模</Tab>
        <Tab>应用程序</Tab>
      </TabBar>

      <Ribbon>
        <Group w={128} label="操作">
          <Big w={62} i="regen" t="重新生成" c />
          <Col>
            <Entry i="copy" t="复制" />
            <PasteButton>
              <ItemIcon>{icons.paste}</ItemIcon>
              粘贴
              <PasteDrop>
                <Caret />
              </PasteDrop>
            </PasteButton>
          </Col>
        </Group>
        <Group w={107} pl={8} label="获取数据">
          <Stack
            items={[
              { i: "udf", t: "用户定义特征" },
              { i: "cgeom", t: "复制几何" },
            ]}
          />
        </Group>
        <Group w={112} pl={8} label="主体">
          <Stack
            items={[
              { i: "bool", t: "布尔运算" },
              { i: "split", t: "分割/修剪主体" },
              { i: "cube", t: "新建主体" },
            ]}
          />
        </Group>
        <Group w={151} label="基准">
          <Big w={48} i="plane" t="平面" />
          <Stack
            w={57}
            items={[
              { i: "axis", t: "轴" },
              { i: "point", t: "点", c: true },
              { i: "csys", t: "坐标系" },
            ]}
          />
          <Big w={46} i="sketch" t="草绘" />
        </Group>
        <Group w={123} label="形状">
          <Big w={48} i="extrude" t="拉伸" />
          <Stack
            items={[
              { i: "revolve", t: "旋转" },
              { i: "sweep", t: "扫描", c: true },
              { i: "sblend", t: "扫描混合" },
            ]}
          />
        </Group>
        <Group w={151} pl={8} label="工程">
          <Stack
            w={78}
            items={[
              { i: "hole", t: "孔", off: true },
              { i: "round", t: "倒圆角", c: true },
              { i: "chamfer", t: "倒角", c: true },
            ]}
          />
          <Stack
            items={[
              { i: "draft", t: "拔模", c: true },
              { i: "shell", t: "壳", off: true },
              { i: "rib", t: "筋", c: true, off: true },
            ]}
          />
        </Group>
        <Group w={303} label="编辑">
          <Big w={47} i="pattern" t="阵列" c />
          <Stack
            w={52}
            items={[
              { i: "mirror", t: "镜像" },
              { i: "trim", t: "修剪" },
              { i: "merge", t: "合并" },
            ]}
          />
          <Stack
            w={53}
            items={[
              { i: "extend", t: "延伸" },
              { i: "offset", t: "偏移" },
              { i: "intersect", t: "相交" },
            ]}
          />
          <Stack
            w={64}
            items={[
              { i: "project", t: "投影" },
              { i: "thicken", t: "加厚" },
              { i: "solidify", t: "实体化" },
            ]}
          />
          <Stack
            items={[
              { i: "remove", t: "移除" },
              { i: "split2", t: "分割", c: true },
              { i: "unify", t: "一体化曲面" },
            ]}
          />
        </Group>
        <Group w={128} label="曲面">
          <Big w={65} i="boundary" t="边界混合" />
          <Stack
            items={[
              { i: "fill", t: "填充" },
              { i: "style", t: "样式" },
              { i: "free", t: "自由式" },
            ]}
          />
        </Group>
        <Group w={69} label="模型意图">
          <Big w={67} i="iface" t="元件界面" />
        </Group>
      </Ribbon>

      <Popup>
        <PopRow $on>
          <PopGutter>{icons.paste}</PopGutter>
          <PopLabel>粘贴</PopLabel>
          <PopKey>Ctrl+V</PopKey>
        </PopRow>
        <PopRow>
          <PopGutter $rule>{icons.pasteS}</PopGutter>
          <PopLabel>选择性粘贴</PopLabel>
          <PopKey>Ctrl+Shift+V</PopKey>
        </PopRow>
      </Popup>

      <Main>
        <Side>
          <SideTabs>
            <SideTab $on>{icons.treeMode}</SideTab>
            <SideTab>{icons.folders}</SideTab>
          </SideTabs>
          <SideTools>
            <ToolSlot $w={20}>{icons.greenCube}</ToolSlot>
            <ToolSlot $w={23}>{icons.grip}</ToolSlot>
            <ToolSlot $w={25}>{icons.listTree}</ToolSlot>
            <ToolSlot $w={17}>{icons.listDots}</ToolSlot>
            <ToolActive>{icons.tableEye}</ToolActive>
            <ToolRule />
            <ToolSlot $w={18}>{icons.more}</ToolSlot>
            {icons.docList}
          </SideTools>
          <FilterRow>
            {icons.funnel}
            <FilterBox>{icons.xMark}</FilterBox>
            <Caret />
            <ToolSlot $w={11} />
            {icons.plus}
          </FilterRow>
          <Tree>
            {nodes.map((n, k) => (
              <Row
                key={n.t + k}
                $lv={n.lv}
                $line={!n.e}
                $deep={k >= 2 && k <= 6}
                $top={k === 1}
                $last={k === nodes.length - 1}
                $lastDeep={k === 6}
                $fade={n.fade}
              >
                {n.lv > 0 && <Exp>{n.e === "r" ? <ExpRight /> : n.e === "d" ? <ExpDown /> : null}</Exp>}
                <RowIcon>{icons[n.i]}</RowIcon>
                <RowText $sel={n.sel} $latin={/^[\x00-\x7f]+$/.test(n.t)}>
                  {n.t}
                </RowText>
              </Row>
            ))}
            <GreenRule />
          </Tree>
        </Side>

        <Graphics>
          <Spiral width="1146" height="769" viewBox="0 0 1146 769">
            <path d={blue} fill="none" stroke="#0a0ae0" strokeWidth="1.300" shapeRendering="crispEdges" />
            <path d={red} fill="none" stroke="#ff3333" strokeWidth="1.300" shapeRendering="crispEdges" />
            <path d="M704.500 421v24" stroke="#ff3a3a" strokeWidth="1.200" />
            <path d="M704.500 445.500H729" stroke="#22ffff" strokeWidth="1.200" />
            <circle cx="704.500" cy="421" r="2" fill="#ff2a2a" />
            <circle cx="729" cy="445.500" r="2" fill="#22e8ff" />
            <circle cx="704.500" cy="445.500" r="2.500" fill="#22ff33" />
          </Spiral>

          <Note $top={69}>
            {noteA.map((x, k) => (
              <NoteCell key={k} $sx={x.sx} $sy={x.sy} $fs={x.fs} $wt={x.wt}>
                {x.c}
              </NoteCell>
            ))}
          </Note>
          <Note $top={115}>
            {noteB.map((x, k) => (
              <NoteCell key={k} $sx={x.sx} $sy={x.sy} $fs={x.fs} $wt={x.wt}>
                {x.c}
              </NoteCell>
            ))}
          </Note>

          <ViewBar>
            {viewIcons.map((v) => (
              <ViewBtn key={v.i} $on={v.on}>
                {icons[v.i]}
              </ViewBtn>
            ))}
          </ViewBar>

          <Watermark>
            <Flame width="20" height="44" viewBox="0 0 20 44">
              <path d="M3 0c8 6 14 16 12 27-1 6-6 11-11 15 3-8 6-15 5-23C8 12 6 6 3 0z" fill="#f2693a" />
            </Flame>
            <WmTitle>
              <WmHot>野火</WmHot>
              <WmCool>论坛</WmCool>
            </WmTitle>
            <WmUrl>www.proewildfire.cn</WmUrl>
          </Watermark>
        </Graphics>
      </Main>

      <ArrowMark width="230" height="230" viewBox="0 0 230 230">
        <path d="M164 138 181 147 175 151 211 218 171 156 166 160z" fill="#f8333a" />
      </ArrowMark>
    </Page>
  );
}
